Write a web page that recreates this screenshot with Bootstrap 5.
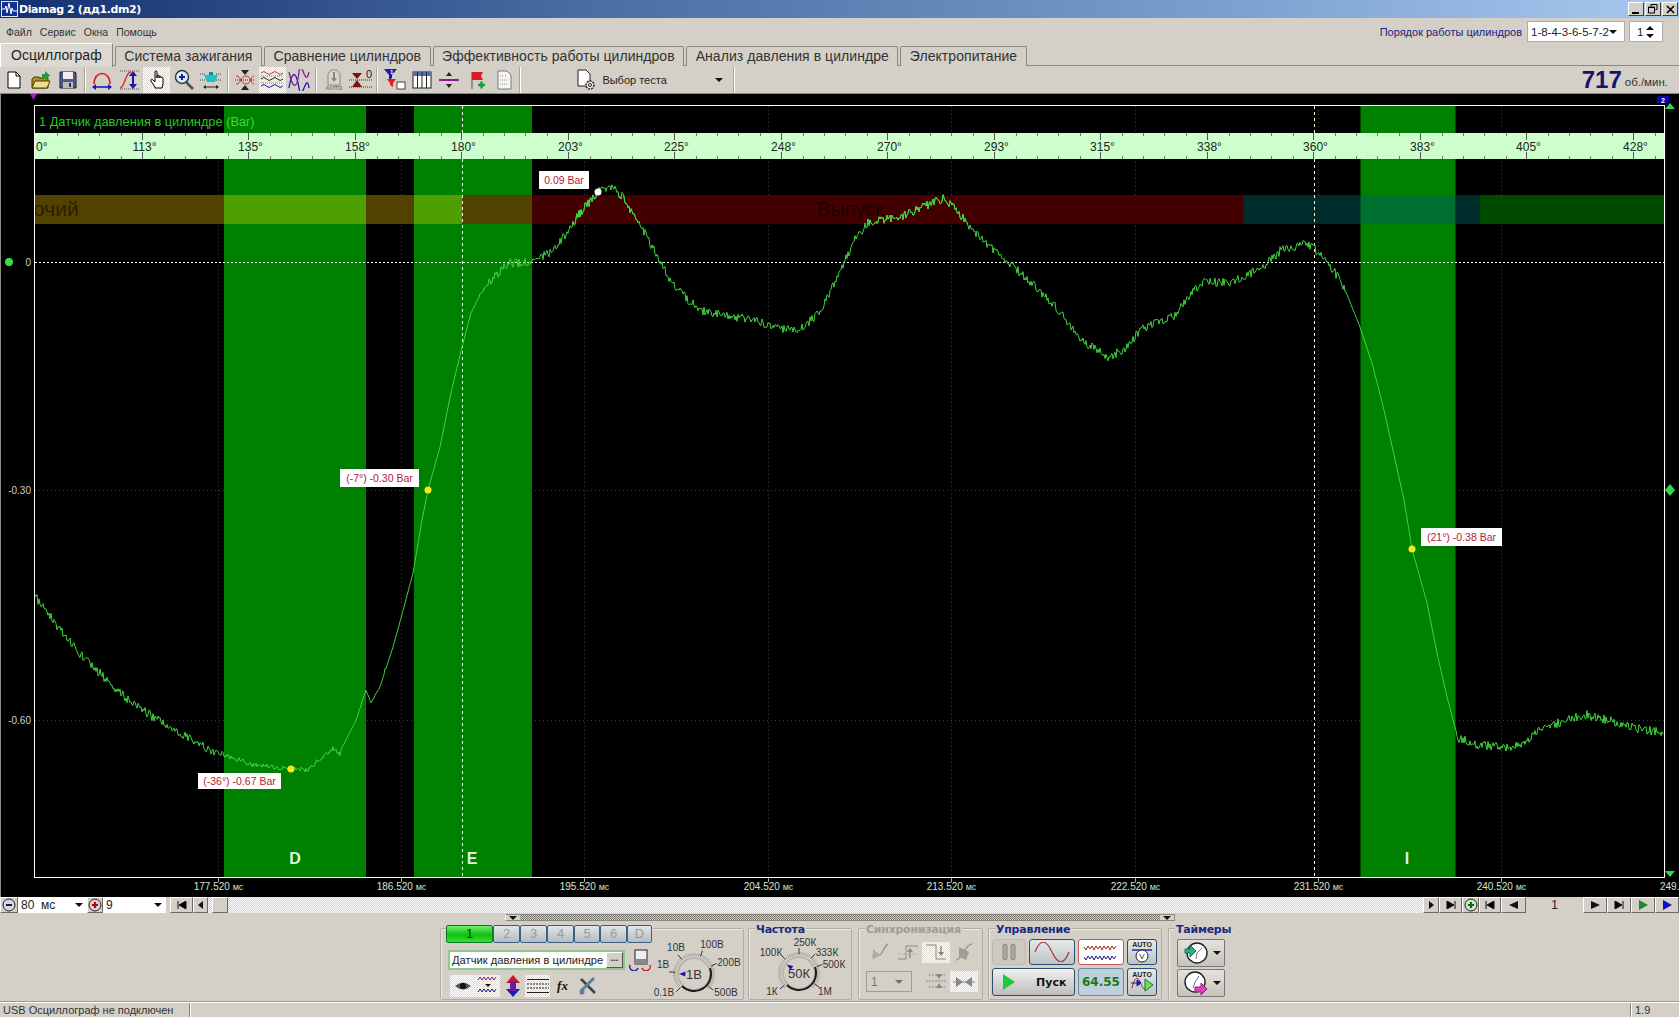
<!DOCTYPE html>
<html lang="ru">
<head>
  <meta charset="UTF-8">
  <title>Diamag 2 (дд1.dm2)</title>
  <meta name="viewport" content="width=device-width, initial-scale=1">
  <link href="https://cdn.jsdelivr.net/npm/bootstrap@5.3.3/dist/css/bootstrap.min.css" rel="stylesheet">
  <style>
    html, body { height: 100%; }
    body { background: #d4d0c8; color: #222; font: 11px "Liberation Sans", Arial, sans-serif; overflow: hidden; }
    svg { display: block; flex: none; }
    .app-shell { width: 1679px; height: 1017px; }

    .title-bar { height: 18px; background: linear-gradient(90deg, #12306f 0, #4a6da3 35%, #7094c4 65%, #a6caf0 100%); color: #fff; font: bold 11px "DejaVu Sans", sans-serif; letter-spacing: -.4px; }
    .win-btn { width: 16px; height: 14px; margin-right: 1px; background: #d4d0c8; border: 1px solid; border-color: #fff #404040 #404040 #fff; }
    .menu-row { height: 27px; padding-left: 6px; color: #333; font-size: 10.5px; gap: 8px; }
    .order-label { color: #1b1b80; font-size: 11px; margin-right: 5px; }
    .fake-combo { background: #fff; height: 21px; border: 1px solid #b0aca4; color: #222; font-size: 11.5px; padding-left: 3px; white-space: nowrap; }
    .down-tri { width: 0; height: 0; border-left: 4px solid transparent; border-right: 4px solid transparent; border-top: 4px solid #111; flex: none; }
    .up-tri { width: 0; height: 0; border-left: 4px solid transparent; border-right: 4px solid transparent; border-bottom: 4px solid #111; }

    .sheet-tabs { height: 21px; border-bottom: 1px solid #8a877f; padding-left: 0; flex-wrap: nowrap; gap: 2px; }
    .sheet-tabs .nav-link { height: 20px; margin: 1px 0 0; padding: 0 8.5px; border: 1px solid #8a877f; border-bottom: 0; border-radius: 2px 2px 0 0; background: #d4d0c8; color: #333; font-size: 14px; line-height: 18px; letter-spacing: .05px; white-space: nowrap; }
    .sheet-tabs .nav-link.active { height: 24px; margin: -2px 0 -1px; padding: 0 10px; background: #dcd9d2; color: #222; border-color: #fff #8a877f #d4d0c8 #fff; line-height: 22px; }

    .tool-row { height: 28px; border-bottom: 1px solid #8a877f; }
    .tool-btn { width: 27.2px; height: 26px; }
    .tool-on { background: repeating-conic-gradient(#fff 0 25%, #dedbd5 0 50%) 0 0 / 2px 2px; }
    .tool-sep { width: 7px; height: 26px; position: relative; }
    .tool-sep::after { content: ""; display: block; width: 1px; height: 26px; margin-left: 2px; background: #a8a59d; box-shadow: 1px 0 #fff; }
    .test-pick { width: 207px; height: 26px; padding-left: 52px; font-size: 11px; color: #222; }
    .rpm-num { color: #14146e; font: bold 24px/26px "Liberation Sans", sans-serif; }
    .rpm-unit { color: #333; font-size: 11.5px; margin: 5px 11px 0 3px; }

    .plot-area { height: 803px; background: #000; }

    .scroll-row { height: 16px; }
    .dither { background: repeating-conic-gradient(#fff 0 25%, #d4d0c8 0 50%) 0 0 / 2px 2px; }
    .raised { background: #d4d0c8; border: 1px solid; border-color: #fff #6a6a6a #6a6a6a #fff; height: 16px; }
    .white-combo { background: #fff; height: 16px; font-size: 12px; padding-left: 3px; color: #222; }

    .ctrl-panel { height: 89px; padding-left: 440px; border-bottom: 1px solid #9a9790; }
    .split-bar { width: 670px; height: 7px; margin: 1px 0 7px 65px; border: 1px solid #8a877f; border-left-color: #fff; background: repeating-conic-gradient(#77746d 0 25%, #d4d0c8 0 50%) 0 0 / 2px 2px; }
    .split-tip { width: 14px; background: #d4d0c8; }
    .ctl-group { height: 72px; border: 1px solid #b0ada5; box-shadow: inset 1px 1px #ece9e3; border-radius: 2px; }
    .ctl-title { width: fit-content; margin: -5px 0 0 6px; padding: 0 1px; background: #d4d0c8; color: #1a2a80; font: bold 11px/12px "DejaVu Sans", sans-serif; letter-spacing: -.25px; }
    .ctl-title.off { color: #a09d96; }

    .btn.chan-btn { height: 18px; padding: 0; border: 1px solid #3b5f86; border-radius: 2px; background: linear-gradient(#e2e5e8, #b6bdc2); color: #9a9a9a; font-size: 13px; line-height: 16px; }
    .btn.chan-btn.on { background: linear-gradient(#6af06a, #10c010 55%, #34e034); border-color: #0a7a2a; color: #0a3a0a; }
    .sensor-box { width: 177px; height: 20px; margin-left: 7px; background: #fff; border: 2px solid #8fc98f; font-size: 11.2px; color: #222; padding-left: 2px; white-space: nowrap; }
    .dots-btn { width: 17px; height: 16px; margin-left: auto; background: #d4d0c8; border: 1px solid; border-color: #fff #555 #555 #fff; font: bold 9px/10px "Liberation Sans", sans-serif; text-align: center; flex: none; }
    .mini-icon { width: 25px; height: 22px; }

    .sync-grid { display: grid; grid-template-columns: repeat(4, 28px); row-gap: 8px; margin: 6px 0 0 7px; }
    .sync-cell { height: 21px; }
    .sync-combo { grid-column: span 2; width: 46px; height: 21px; border: 1px solid #a09d96; color: #777; font-size: 12px; padding-left: 4px; }

    .run-grid { display: grid; grid-template-columns: 34px 46px 46px 30px; grid-template-rows: 26px 28px; gap: 3px; margin: 3px 0 0 3px; }
    .btn.run-btn { padding: 0; border: 1px solid #2c4c6c; border-radius: 3px; background: linear-gradient(#e6e9ea, #bcc4c7); font-size: 12px; display: flex; align-items: center; justify-content: center; }
    .btn.run-btn.flat { border-color: #bdbab3; background: #ccc9c2; }
    .btn.run-btn.alert-line { border-color: #c05a5a; background: #fff; }
    .btn.run-btn.start-btn { grid-column: span 2; background: linear-gradient(#f0f0f0, #bdbdbd); color: #111; font: bold 11px "DejaVu Sans", sans-serif; gap: 20px; justify-content: flex-start; padding-left: 9px; }
    .btn.run-btn.freq-val { background: #bfd0dc; border-color: #6a8aaa; color: #1a7a1a; font: bold 12px "DejaVu Sans", sans-serif; }
    .btn.timer-btn { width: 48px; height: 28px; margin: 0 0 2px 8px; padding: 0 5px; border: 1px solid #777; border-radius: 2px; background: linear-gradient(#e4e2dd, #c6c3bb); display: flex; align-items: center; gap: 4px; }

    .status-row { height: 15px; font-size: 11px; color: #333; line-height: 15px; border-top: 1px solid #fff; }
    .status-cell { border-right: 1px solid #8a877f; box-shadow: 1px 0 #fff; padding-left: 3px; }
  </style>
</head>
<body>
<div class="app-shell d-flex flex-column">

  <div class="title-bar d-flex align-items-center">
    <svg width="17" height="16" viewBox="0 0 17 16" style="margin:0 1px"><rect x=".5" y=".5" width="16" height="15" fill="#12309a" stroke="#dfe6f5"/><path d="M1 8h3l1-3 1 7 2-10 2 11 1-6 1 3h4" fill="none" stroke="#fff"/></svg>
    <span>Diamag 2 (дд1.dm2)</span>
    <div class="ms-auto d-flex">
      <div class="win-btn d-flex align-items-end justify-content-center"><svg width="8" height="4"><rect y="1" width="7" height="2" fill="#000"/></svg></div>
      <div class="win-btn d-flex align-items-center justify-content-center"><svg width="10" height="10"><path d="M3 2V.5h6v5H7.5M.5 3h6v6h-6zM.5 3.500h6" fill="none" stroke="#000"/></svg></div>
      <div class="win-btn d-flex align-items-center justify-content-center"><svg width="9" height="9"><path d="M1 1l7 7M8 1l-7 7" stroke="#000" stroke-width="1.6"/></svg></div>
    </div>
  </div>

  <div class="menu-row d-flex align-items-center">
    <span>Файл</span><span>Сервис</span><span>Окна</span><span>Помощь</span>
    <div class="ms-auto d-flex align-items-center">
      <span class="order-label">Порядок работы цилиндров</span>
      <div class="fake-combo d-flex align-items-center" style="width:98px"><span>1-8-4-3-6-5-7-2</span><i class="down-tri ms-auto me-2"></i></div>
      <div class="fake-combo d-flex align-items-center ms-1" style="width:34px;margin-right:16px"><span class="ms-1">1</span><span class="ms-auto me-2 d-flex flex-column gap-1"><i class="up-tri"></i><i class="down-tri"></i></span></div>
    </div>
  </div>

  <ul class="nav nav-tabs sheet-tabs">
    <li class="nav-item"><a class="nav-link active" href="#">Осциллограф</a></li>
    <li class="nav-item"><a class="nav-link" href="#">Система зажигания</a></li>
    <li class="nav-item"><a class="nav-link" href="#">Сравнение цилиндров</a></li>
    <li class="nav-item"><a class="nav-link" href="#">Эффективность работы цилиндров</a></li>
    <li class="nav-item"><a class="nav-link" href="#">Анализ давления в цилиндре</a></li>
    <li class="nav-item"><a class="nav-link" href="#">Электропитание</a></li>
  </ul>

  <div class="tool-row d-flex align-items-center">
    <div class="tool-btn d-flex align-items-center justify-content-center"><svg width="22" height="22"><path d="M5 3h8l4 4v12H5z" fill="#fff" stroke="#000"/><path d="M13 3v4h4" fill="none" stroke="#000"/></svg></div>
    <div class="tool-btn d-flex align-items-center justify-content-center"><svg width="22" height="22"><path d="M2 10l2-2h5v1h9v10H2z" fill="#a8902a" stroke="#4a3c00"/><path d="M2 19l3-7h15l-3 7z" fill="#efe08e" stroke="#4a3c00"/><path d="M12 9V5h3V2l5 4.500-5 4.500V8h-1v2z" fill="#1c9a3c"/></svg></div>
    <div class="tool-btn d-flex align-items-center justify-content-center"><svg width="22" height="22"><path d="M3 3h15l1 1v15H3z" fill="#54548c" stroke="#222"/><rect x="6" y="3" width="10" height="7" fill="#eee"/><rect x="6" y="13" width="10" height="6" fill="#bbb"/><rect x="12" y="14" width="2" height="4" fill="#333"/></svg></div>
    <div class="tool-sep"></div>
    <div class="tool-btn d-flex align-items-center justify-content-center"><svg width="22" height="22"><path d="M3 15C3 1 19 1 19 15" fill="none" stroke="#d82020" stroke-width="1.6"/><path d="M2 18h18" stroke="#1a1ab0" stroke-width="1.6"/><path d="M1 18l4-3v6zM21 18l-4-3v6z" fill="#1a1ab0"/></svg></div>
    <div class="tool-btn d-flex align-items-center justify-content-center"><svg width="22" height="22"><path d="M2 19C7 19 7 3 13 3" fill="none" stroke="#d83020" stroke-width="1.4"/><path d="M2 2h19M2 20h19" stroke="#555" stroke-dasharray="1 1"/><path d="M15 5v12" stroke="#1a1ab0" stroke-width="2"/><path d="M15 2l-4 5h8zM15 20l-4-5h8z" fill="#1a1ab0"/></svg></div>
    <div class="tool-btn tool-on d-flex align-items-center justify-content-center"><svg width="22" height="22"><path d="M9 18l-4-6c-1-2 1-2 2-1l2 2V3c0-1.500 2-1.500 2 0v6-2c0-1.300 2-1.300 2 0v2-1c0-1.300 2-1.300 2 0v1c0-1 2-1 2 .5V15l-1 4H9z" fill="#fff" stroke="#000"/></svg></div>
    <div class="tool-btn d-flex align-items-center justify-content-center"><svg width="22" height="22"><path d="M13 13l7 7" stroke="#554" stroke-width="2.6"/><circle cx="9" cy="8" r="6.500" fill="#dcecff" stroke="#333" stroke-width="1.400"/><path d="M6 8h6M9 5v6" stroke="#1a1ab0" stroke-width="2"/></svg></div>
    <div class="tool-btn d-flex align-items-center justify-content-center"><svg width="24" height="22"><path d="M5 6h14l-3 7h-8z" fill="#19c5c5"/><path d="M1 5h6M17 5h6M1 11h6M17 11h6" stroke="#444" stroke-dasharray="1 1"/><path d="M6 18h12" stroke="#222"/><path d="M4 18l3-2v4zM20 18l-3-2v4z" fill="#222"/><path d="M10 3h4v3h-4z" fill="#0d8f8f"/></svg></div>
    <div class="tool-sep"></div>
    <div class="tool-btn d-flex align-items-center justify-content-center"><svg width="22" height="22"><path d="M2 7c5 0 5 8 10 8s5-8 8-8M2 15c5 0 5-8 10-8s5 8 8 8" fill="none" stroke="#c83030"/><path d="M11 6l-4-5h8zM11 16l-4 5h8z" fill="#222"/><path d="M1 11h20" stroke="#333" stroke-dasharray="1 1"/></svg></div>
    <div class="tool-btn tool-on d-flex align-items-center justify-content-center"><svg width="24" height="24"><path d="M1 5q3-3 5.500 0t5.500 0 5.500 0 5.500 0" fill="none" stroke="#c83030"/><path d="M1 11q3-3 5.500 0t5.500 0 5.500 0 5.500 0" fill="none" stroke="#222"/><path d="M1 18q3-3 5.500 0t5.500 0 5.500 0 5.500 0" fill="none" stroke="#1a1ab0"/><path d="M1 8h22M1 15h22" stroke="#777" stroke-dasharray="1 1"/></svg></div>
    <div class="tool-btn d-flex align-items-center justify-content-center"><svg width="22" height="22"><path d="M1 19C4 1 8 1 11 19S18 1 21 19" fill="none" stroke="#1a1ab0" stroke-width="1.300"/><path d="M1 3c4 18 8 18 10 0s6 18 10 0" fill="none" stroke="#8a1a8a" stroke-width="1.300"/></svg></div>
    <div class="tool-sep"></div>
    <div class="tool-btn d-flex align-items-center justify-content-center"><svg width="24" height="24"><path d="M9 2h6l3 4v11H6V6z" fill="#d8d5ce" stroke="#8a877f"/><path d="M12 4v8" stroke="#8a877f" stroke-width="2"/><path d="M12 14l-3-4h6z" fill="#8a877f"/><text x="12" y="22" font-size="6" font-weight="700" text-anchor="middle" fill="#77746d">AUTO</text></svg></div>
    <div class="tool-btn d-flex align-items-center justify-content-center"><svg width="24" height="22"><path d="M8 10l-5-6h10zM8 11l-5 7h10z" fill="#7a1010"/><path d="M0 11h24M0 18h24" stroke="#333" stroke-dasharray="1 1"/><text x="17" y="9" font-size="11" fill="#222">0</text></svg></div>
    <div class="tool-sep"></div>
    <div class="tool-btn d-flex align-items-center justify-content-center"><svg width="24" height="24"><path d="M1 1h13l-5 6v3l-3 2V7z" fill="#1a1ab0"/><path d="M4 11h9l-3 4v4l-3-2v-2z" fill="#d82020"/><rect x="14" y="14" width="8" height="7" fill="#fff" stroke="#444"/><text x="7" y="6" font-size="6" fill="#fff" font-weight="700">1</text></svg></div>
    <div class="tool-btn d-flex align-items-center justify-content-center"><svg width="22" height="22"><rect x="2" y="3" width="18" height="16" fill="#fff" stroke="#222"/><rect x="2" y="3" width="18" height="4" fill="#5a6fae"/><path d="M6.500 3v16M11 3v16M15.500 3v16" stroke="#222"/></svg></div>
    <div class="tool-btn d-flex align-items-center justify-content-center"><svg width="22" height="22"><path d="M1 11h20" stroke="#8a1a9a" stroke-width="2"/><path d="M11 3l-3 4h6zM11 19l-3-4h6z" fill="#222"/></svg></div>
    <div class="tool-btn d-flex align-items-center justify-content-center"><svg width="22" height="22"><path d="M6 20V3" stroke="#555"/><path d="M6 3h11l-2 4 2 4H6z" fill="#d81a2a"/><path d="M12 16h7M15.500 12.500v7" stroke="#1a9a3a" stroke-width="2.400"/></svg></div>
    <div class="tool-btn d-flex align-items-center justify-content-center"><svg width="22" height="22"><path d="M5 2h9l4 4v14H5z" fill="#f6f6f0" stroke="#777"/><path d="M7 7h3M7 11h7M7 15h7M12 7h2" stroke="#888" stroke-dasharray="1 1"/></svg></div>
    <div class="tool-sep"></div>
    <div class="test-pick d-flex align-items-center">
      <svg width="22" height="22" class="me-1"><path d="M2 1h8l4 4v12H2z" fill="#fff" stroke="#222"/><circle cx="14" cy="16" r="4" fill="#eee" stroke="#222" stroke-width="1.500" stroke-dasharray="2 1"/><circle cx="14" cy="16" r="1.500" fill="#fff" stroke="#222"/></svg>
      <span>Выбор теста</span><i class="down-tri ms-auto me-2"></i>
    </div>
    <div class="tool-sep"></div>
    <div class="ms-auto d-flex align-items-center"><span class="rpm-num">717</span><span class="rpm-unit">об./мин.</span></div>
  </div>

  <div class="plot-area">
    <svg id="plot" width="1679" height="803" viewBox="0 94 1679 803" font-family="Liberation Sans, Arial, sans-serif">
      <defs><clipPath id="phase-clip"><rect x="34" y="195" width="1631" height="29"/></clipPath></defs>
      <g id="grid-lines"></g>
      <g fill="#008000">
        <rect x="224" y="105" width="142" height="772"/>
        <rect x="414" y="105" width="118" height="772"/>
        <rect x="1360.500" y="105" width="95" height="772"/>
      </g>
      <g>
        <rect x="34" y="195" width="190" height="29" fill="#524200"/>
        <rect x="224" y="195" width="142" height="29" fill="#4ea000"/>
        <rect x="366" y="195" width="48" height="29" fill="#524200"/>
        <rect x="414" y="195" width="48" height="29" fill="#4ea000"/>
        <rect x="462" y="195" width="70" height="29" fill="#524200"/>
        <rect x="532" y="195" width="711" height="29" fill="#420000"/>
        <rect x="1243" y="195" width="117.500" height="29" fill="#002c2c"/>
        <rect x="1360.500" y="195" width="95" height="29" fill="#007030"/>
        <rect x="1455.500" y="195" width="24.500" height="29" fill="#002c2c"/>
        <rect x="1480" y="195" width="185" height="29" fill="#004a00"/>
        <text x="33" y="216" font-size="21" fill="#2a2000">очий</text>
        <text x="817" y="216" font-size="20" fill="#1e0000">Выпуск</text>
      </g>
      <text x="39" y="126" font-size="12.800" fill="#22cc22">1 Датчик давления в цилиндре <tspan fill="#3bd83b">(Bar)</tspan></text>
      <rect x="35" y="133" width="1630" height="26" fill="#ccffcc"/>
      <g id="ruler"></g>
      <path d="M35 262.500H1664" stroke="#fff" stroke-dasharray="2 2"/>
      <path d="M462.500 106V133M462.500 159V877" stroke="#f4f4f4" stroke-dasharray="3 3"/>
      <path d="M1314.500 106V133M1314.500 159V877" stroke="#f4f4d0" stroke-dasharray="3 3"/>
      <path id="trace" fill="none" stroke="#3fd43f"/>
      <use href="#trace" clip-path="url(#phase-clip)" style="stroke:#9aa83a"/>
      <path d="M34.500 105V877.500M34 105.500H1665M34 877.500H1665M1664.500 105V877" stroke="#fff" fill="none"/>
      <path d="M1665.500 105V877" stroke="#0000c0"/>
      <path d="M.5 94V897" stroke="#8a8a8a"/>

      <circle cx="9" cy="262" r="4" fill="#2fe04f"/>
      <g font-size="10" fill="#d0d0d0" text-anchor="end">
        <text x="31" y="266">0</text><text x="31" y="494">-0.30</text><text x="31" y="724">-0.60</text>
      </g>
      <path d="M30 94h7l-3.500 6z" fill="#a018c8"/>
      <rect x="1657" y="96" width="12" height="7" fill="#0808b0"/>
      <text x="1663" y="102.500" font-size="7" font-weight="700" fill="#fff" text-anchor="middle">2</text>
      <path d="M1670 103l5 6h-10z" fill="#2fd84f"/>
      <path d="M1670 484l5 6-5 6-5-6z" fill="#2fd84f"/>
      <path d="M1665 871h10l-5 6z" fill="#2fd84f"/>

      <g id="time-labels" font-size="10" fill="#d4e4d4" text-anchor="middle"></g>

      <g font-size="16" font-weight="700" fill="#dff5df" text-anchor="middle">
        <text x="295" y="864">D</text><text x="472" y="864">E</text><text x="1407" y="864">I</text>
      </g>

      <g font-size="10.500" fill="#b8163a" text-anchor="middle">
        <rect x="539" y="171" width="50" height="18" fill="#fff"/><text x="564" y="184">0.09 Bar</text>
        <rect x="340" y="469" width="79" height="18" fill="#fff"/><text x="379.500" y="482">(-7°) -0.30 Bar</text>
        <rect x="198" y="773" width="83" height="16" fill="#fff"/><text x="239.500" y="785">(-36°) -0.67 Bar</text>
        <rect x="1421" y="528" width="81" height="18" fill="#fff"/><text x="1461.500" y="541">(21°) -0.38 Bar</text>
      </g>
      <circle cx="598" cy="192" r="3.500" fill="#fff"/>
      <circle cx="428" cy="490" r="3.500" fill="#f4e81a"/>
      <circle cx="291" cy="769" r="3.500" fill="#f4e81a"/>
      <circle cx="1412" cy="549" r="3.500" fill="#f4e81a"/>
    </svg>
  </div>

  <div class="scroll-row d-flex">
    <div class="raised d-flex align-items-center justify-content-center" style="width:18px"><svg width="14" height="14"><circle cx="7" cy="7" r="6" fill="#cfd6e6" stroke="#222"/><path d="M4 7h6" stroke="#222" stroke-width="2"/></svg></div>
    <div class="white-combo d-flex align-items-center" style="width:69px"><span>80&nbsp; мс</span><i class="down-tri ms-auto me-1"></i></div>
    <div class="raised d-flex align-items-center justify-content-center" style="width:16px"><svg width="14" height="14"><circle cx="7" cy="7" r="6" fill="#e6c6c6" stroke="#222"/><path d="M4 7h6M7 4v6" stroke="#a01010" stroke-width="2"/></svg></div>
    <div class="white-combo d-flex align-items-center" style="width:63px"><span>9</span><i class="down-tri ms-auto me-1"></i></div>
    <div class="raised d-flex align-items-center justify-content-center ms-1" style="width:23px"><svg width="10" height="8"><path d="M1 0v8M9 0v8L2 4z" stroke="#111"/></svg></div>
    <div class="raised d-flex align-items-center justify-content-center" style="width:15px"><svg width="5" height="8"><path d="M5 0v8L0 4z" fill="#111"/></svg></div>
    <div class="dither flex-grow-1 d-flex">
      <div class="raised ms-1" style="width:16px"></div>
    </div>
    <div class="raised d-flex align-items-center justify-content-center" style="width:16px"><svg width="5" height="8"><path d="M0 0v8l5-4z" fill="#111"/></svg></div>
    <div class="raised d-flex align-items-center justify-content-center" style="width:23px"><svg width="10" height="8"><path d="M9 0v8M1 0v8l7-4z" stroke="#111"/></svg></div>
    <div class="raised d-flex align-items-center justify-content-center" style="width:17px"><svg width="14" height="14"><circle cx="7" cy="7" r="6" fill="#c6e6c6" stroke="#222"/><path d="M4 7h6M7 4v6" stroke="#0a6a0a" stroke-width="2"/></svg></div>
    <div class="raised d-flex align-items-center justify-content-center" style="width:22px"><svg width="10" height="8"><path d="M1 0v8M9 0v8L2 4z" stroke="#111"/></svg></div>
    <div class="raised d-flex align-items-center justify-content-center" style="width:25px"><svg width="9" height="8"><path d="M9 0v8L0 4z" fill="#111"/></svg></div>
    <div class="d-flex align-items-center justify-content-center" style="width:57px;font-size:12px">1</div>
    <div class="raised d-flex align-items-center justify-content-center" style="width:24px"><svg width="9" height="8"><path d="M0 0v8l9-4z" fill="#111"/></svg></div>
    <div class="raised d-flex align-items-center justify-content-center" style="width:24px"><svg width="10" height="8"><path d="M9 0v8M1 0v8l7-4z" stroke="#111"/></svg></div>
    <div class="raised d-flex align-items-center justify-content-center" style="width:24px"><svg width="9" height="10"><path d="M0 0v10l9-5z" fill="#1c8a2c"/></svg></div>
    <div class="raised d-flex align-items-center justify-content-center" style="width:24px"><svg width="9" height="10"><path d="M0 0v10l9-5z" fill="#1010c8"/></svg></div>
  </div>

  <div class="ctrl-panel">
    <div class="split-bar d-flex justify-content-between">
      <div class="split-tip d-flex align-items-center justify-content-center"><i class="down-tri"></i></div>
      <div class="split-tip d-flex align-items-center justify-content-center"><i class="down-tri"></i></div>
    </div>
    <div class="d-flex">

      <div class="ctl-group d-flex" style="width:304px">
        <div style="width:213px">
          <div class="d-flex" style="margin:-4px 0 0 5px">
            <button class="btn chan-btn on" style="width:47px">1</button>
            <button class="btn chan-btn" style="width:27px">2</button>
            <button class="btn chan-btn" style="width:27px">3</button>
            <button class="btn chan-btn" style="width:27px">4</button>
            <button class="btn chan-btn" style="width:26px">5</button>
            <button class="btn chan-btn" style="width:27px">6</button>
            <button class="btn chan-btn" style="width:25px">D</button>
          </div>
          <div class="d-flex align-items-center" style="margin-top:6px">
            <div class="sensor-box d-flex align-items-center"><span>Датчик давления в цилиндре</span><span class="dots-btn">...</span></div>
            <svg class="ms-1" width="22" height="22"><rect x="6" y="1" width="12" height="14" fill="#eee" stroke="#222"/><rect x="6" y="10" width="12" height="5" fill="#888"/><path d="M1 16a4 4 0 0 0 8 3" fill="none" stroke="#1a1ab0" stroke-width="1.400"/><path d="M21 16a4 4 0 0 1-8 3" fill="none" stroke="#c82020" stroke-width="1.400"/></svg>
          </div>
          <div class="d-flex align-items-center" style="margin:4px 0 0 9px">
            <div class="mini-icon tool-on d-flex align-items-center justify-content-center"><svg width="20" height="14"><path d="M2 7q8-7 16 0-8 7-16 0z" fill="#555"/><circle cx="10" cy="7" r="3" fill="#111"/></svg></div>
            <div class="mini-icon tool-on d-flex align-items-center justify-content-center"><svg width="22" height="20"><path d="M1 4l2-3 2 3 2-3 2 3 2-3 2 3 2-3 2 3 2-3" fill="none" stroke="#8a1a8a"/><path d="M1 16l2-3 2 3 2-3 2 3 2-3 2 3 2-3 2 3 2-3" fill="none" stroke="#1a1ab0"/><path d="M8 8h6l-3 3z" fill="#111"/></svg></div>
            <div class="mini-icon d-flex align-items-center justify-content-center"><svg width="18" height="22"><path d="M9 0l7 8H2z" fill="#c81a2a"/><path d="M9 22l7-8H2z" fill="#1a1ab8"/><rect x="6" y="6" width="6" height="10" fill="#6a1a9a"/></svg></div>
            <div class="mini-icon tool-on d-flex align-items-center justify-content-center"><svg width="22" height="18"><path d="M0 2.500h22M0 15.500h22" stroke="#222"/><path d="M0 7h22M0 11h22" stroke="#222" stroke-dasharray="2 1"/></svg></div>
            <div class="mini-icon d-flex align-items-center justify-content-center" style="font:italic bold 13px 'Liberation Serif',serif;color:#111">fx</div>
            <div class="mini-icon d-flex align-items-center justify-content-center"><svg width="20" height="20"><path d="M3 3l14 14" stroke="#444" stroke-width="2.500"/><path d="M16 2L3 15" stroke="#5a7fa8" stroke-width="3"/><circle cx="4" cy="16" r="2.500" fill="#5a7fa8"/></svg></div>
          </div>
        </div>
        <svg id="volt-knob" width="89" height="70" viewBox="655 929 89 70" font-size="10" fill="#333"></svg>
      </div>

      <div class="ctl-group ms-1" style="width:104px">
        <div class="ctl-title">Частота</div>
        <svg id="freq-knob" width="102" height="62" viewBox="749 937 102 62" font-size="10" fill="#333"></svg>
      </div>

      <div class="ctl-group" style="width:125px;margin-left:6px">
        <div class="ctl-title off">Синхронизация</div>
        <div class="sync-grid">
          <div class="sync-cell d-flex justify-content-center"><svg width="20" height="20"><path d="M2 14l8-1c3-2 4-9 8-11" fill="none" stroke="#9a978f" stroke-width="1.400"/><path d="M3 7l7 6-7 5z" fill="#b0ada5"/></svg></div>
          <div class="sync-cell d-flex justify-content-center"><svg width="22" height="20"><path d="M1 17h8V4h12" fill="none" stroke="#8a877f"/><path d="M13 16V8" stroke="#8a877f" stroke-width="1.400"/><path d="M13 6l-3 4h6z" fill="#8a877f"/><path d="M1 12h20" stroke="#aaa" stroke-dasharray="1 1"/></svg></div>
          <div class="sync-cell tool-on d-flex justify-content-center"><svg width="22" height="20"><path d="M1 3h10v14h10" fill="none" stroke="#8a877f"/><path d="M16 4v8" stroke="#8a877f" stroke-width="1.400"/><path d="M16 14l-3-4h6z" fill="#8a877f"/></svg></div>
          <div class="sync-cell d-flex justify-content-center"><svg width="22" height="20"><path d="M3 18C9 18 12 2 19 2" fill="none" stroke="#9a978f" stroke-width="1.400"/><path d="M6 5l10 5-3 8-7-3z" fill="#a09d96"/></svg></div>
          <div class="sync-combo d-flex align-items-center"><span>1</span><i class="down-tri ms-auto me-2 opacity-50"></i></div>
          <div class="sync-cell d-flex justify-content-center"><svg width="22" height="20"><path d="M1 10h20M4 4h16M4 16h16" stroke="#8a877f" stroke-dasharray="2 1"/><path d="M14 8l-3-5h6zM14 12l-3 5h6z" fill="#8a877f"/></svg></div>
          <div class="sync-cell tool-on d-flex justify-content-center align-items-center"><svg width="22" height="12"><path d="M0 6h22" stroke="#8a877f"/><path d="M10 6L3 1v10zM12 6l7-5v10z" fill="#8a877f"/></svg></div>
        </div>
      </div>

      <div class="ctl-group" style="width:174px;margin-left:5px">
        <div class="ctl-title">Управление</div>
        <div class="run-grid">
          <button class="btn run-btn flat"><svg width="14" height="20"><rect x="1" y="2" width="4" height="16" rx="2" fill="#aaa7a0" stroke="#8a877f"/><rect x="9" y="2" width="4" height="16" rx="2" fill="#aaa7a0" stroke="#8a877f"/></svg></button>
          <button class="btn run-btn"><svg width="36" height="20"><path d="M1 10C6-3 12-3 18 10s12 13 17 0" fill="none" stroke="#b03030" stroke-width="1.200"/></svg></button>
          <button class="btn run-btn alert-line"><svg width="36" height="20"><path d="M1 5l2 3 2-4 2 3 2-3 2 4 2-4 2 3 2-3 2 4 2-4 2 3 2-3 2 4 2-4 2 3 2-3" fill="none" stroke="#a02020"/><path d="M1 15l2 3 2-4 2 3 2-3 2 4 2-4 2 3 2-3 2 4 2-4 2 3 2-3 2 4 2-4 2 3 2-3" fill="none" stroke="#1a1a80"/></svg></button>
          <button class="btn run-btn"><svg width="24" height="24"><text x="12" y="7" font-size="7" font-weight="700" text-anchor="middle" fill="#222">AUTO</text><path d="M2 10h20" stroke="#1a1ab0" stroke-width="1.400"/><circle cx="12" cy="16" r="6" fill="#fff" stroke="#222"/><text x="12" y="19" font-size="8" text-anchor="middle" fill="#222">V</text></svg></button>
          <button class="btn run-btn start-btn"><svg width="14" height="18"><path d="M1 1v16l12-8z" fill="#22c83a"/></svg><span>Пуск</span></button>
          <button class="btn run-btn freq-val">64.55</button>
          <button class="btn run-btn"><svg width="24" height="24"><text x="12" y="7" font-size="7" font-weight="700" text-anchor="middle" fill="#222">AUTO</text><path d="M2 18c3-12 6-12 9-4s6 6 8 0" fill="none" stroke="#a02020"/><path d="M1 13h6M7 10l4 3-4 3z" fill="#1a1ab0" stroke="#1a1ab0"/><path d="M15 9l8 6-8 6z" fill="#6ae05a" stroke="#1a7a1a"/></svg></button>
        </div>
      </div>

      <div class="ctl-group" style="width:66px;margin-left:6px;border-right:0;border-bottom:0">
        <div class="ctl-title">Таймеры</div>
        <button class="btn timer-btn" style="margin-top:3px"><svg width="26" height="24"><circle cx="14" cy="12" r="10" fill="#fff" stroke="#222" stroke-width="1.400"/><path d="M14 12l5-5M14 12l-1 6" stroke="#a06a6a"/><path d="M2 8h5V4l6 6-6 6v-4H2z" fill="#2ab08a" stroke="#1a6a5a"/></svg><i class="down-tri"></i></button>
        <button class="btn timer-btn"><svg width="26" height="24"><circle cx="12" cy="11" r="10" fill="#fff" stroke="#222" stroke-width="1.400"/><path d="M12 11l4-6M12 11l-2 6" stroke="#6a6aa0"/><path d="M12 16h6v-4l6 6-6 6v-3h-6z" fill="#e040c0" stroke="#8a1a7a"/></svg><i class="down-tri"></i></button>
      </div>
    </div>
  </div>

  <div class="status-row d-flex">
    <div class="status-cell" style="width:190px">USB Осциллограф не подключен</div>
    <div class="status-cell" style="width:1441px"></div>
    <div class="ps-1">1.9</div>
  </div>
</div>

<script src="https://cdn.jsdelivr.net/npm/bootstrap@5.3.3/dist/js/bootstrap.bundle.min.js"></script>
<script>
  const NS = 'http://www.w3.org/2000/svg';
  function put(parent, tag, attrs, text) {
    const el = document.createElementNS(NS, tag);
    for (const k in attrs) el.setAttribute(k, attrs[k]);
    if (text !== undefined) el.textContent = text;
    parent.appendChild(el);
    return el;
  }

  // dim grid, only seen outside the green bands
  const grid = document.getElementById('grid-lines');
  const timeLabels = document.getElementById('time-labels');
  const times = ['177.520', '186.520', '195.520', '204.520', '213.520', '222.520', '231.520', '240.520'];
  times.forEach((t, i) => {
    const x = Math.round(217.5 + 183.4 * i) + .5;
    put(grid, 'path', { d: `M${x} 106V877`, stroke: '#3a3a3a', 'stroke-dasharray': '1 3' });
    put(grid, 'path', { d: `M${x} 877V882`, stroke: '#aaa' });
    const label = put(timeLabels, 'text', { x: x, y: 890 }, t + ' ');
    put(label, 'tspan', { 'font-size': 9 }, 'мс');
  });
  put(timeLabels, 'text', { x: 1660, y: 890, 'text-anchor': 'start' }, '249.');
  [262, 490, 720].forEach(y => put(grid, 'path', { d: `M35 ${y + .5}H1664`, stroke: '#3a3a3a', 'stroke-dasharray': '1 3' }));

  // angle ruler
  const ruler = document.getElementById('ruler');
  const degrees = [0, 113, 135, 158, 180, 203, 225, 248, 270, 293, 315, 338, 360, 383, 405, 428];
  degrees.forEach((d, i) => {
    const x = Math.round(35 + 106.5 * i) + .5;
    if (i > 0) put(ruler, 'path', { d: `M${x} 133v7M${x} 152v7`, stroke: '#555' });
    put(ruler, 'text', { x: i ? x + 2 : 36, y: 151, 'font-size': 12, fill: '#222', 'text-anchor': i ? 'middle' : 'start' }, d + '°');
    for (let j = 1; j < 5; j++) {
      const mx = Math.round(x + 21.3 * j) + .5;
      if (mx < 1664) put(ruler, 'path', { d: `M${mx} 133v3M${mx} 156v3`, stroke: '#777' });
    }
  });

  // pressure trace: key points read off the screen, noise on top
  const pts = [[35,596],[58,627],[83,657],[112,685],[134,705],[170,727],[201,745],[223,755],[254,765],[291,769],[308,770],[333,748],[339,753],[355,723],[366,690],[371,703],[380,687],[393,647],[404,607],[413,573],[422,520],[428,490],[440,447],[451,393],[462,347],[471,313],[484,287],[496,275],[509,263],[531,262],[549,253],[567,233],[580,213],[598,192],[614,187],[625,200],[643,230],[661,263],[670,280],[688,300],[700,310],[738,317],[769,325],[797,332],[819,313],[831,290],[847,257],[856,237],[869,222],[906,215],[944,198],[959,213],[975,232],[1000,255],[1031,282],[1056,307],[1081,340],[1109,358],[1125,348],[1144,327],[1175,315],[1200,283],[1231,282],[1262,268],[1281,250],[1306,243],[1325,257],[1344,287],[1360,327],[1372,363],[1384,410],[1404,500],[1412,549],[1427,603],[1437,653],[1447,697],[1455,727],[1458,738],[1477,745],[1510,747],[1525,743],[1537,732],[1553,725],[1570,718],[1587,715],[1617,722],[1633,728],[1663,733]];
  let seed = 12345;
  function rnd() { seed = (seed * 1103515 + 12345) % 2147483648; return seed / 2147483648 - .5; }
  function noiseAt(x) {
    if (x > 385 && x < 480) return .5;
    if (x > 1345 && x < 1457) return .3;
    if (x > 340 && x < 385) return 1.5;
    if (x > 224 && x < 340) return 5;
    return 9;
  }
  let d = '', seg = 0;
  for (let x = 35; x <= 1663; x++) {
    while (pts[seg + 1][0] < x) seg++;
    const [x0, y0] = pts[seg], [x1, y1] = pts[seg + 1];
    const y = y0 + (y1 - y0) * (x - x0) / (x1 - x0) + rnd() * noiseAt(x);
    d += (d ? 'L' : 'M') + x + ' ' + y.toFixed(1);
  }
  document.getElementById('trace').setAttribute('d', d);

  // rotary switches
  function knob(id, cx, cy, centre, labels, pointerDeg) {
    const svg = document.getElementById(id);
    const at = (deg, r) => [cx + r * Math.sin(deg * Math.PI / 180), cy - r * Math.cos(deg * Math.PI / 180)];
    for (let deg = -135; deg <= 135; deg += 6) {
      const [a, b] = at(deg, 18), [e, f] = at(deg, 21);
      put(svg, 'path', { d: `M${a} ${b}L${e} ${f}`, stroke: '#a09d96' });
    }
    put(svg, 'circle', { cx, cy, r: 16, fill: '#d4d0c8', stroke: '#b8b5ae', 'stroke-width': 2 });
    put(svg, 'path', { d: `M${at(-135, 17).join(' ')}A17 17 0 0 0 ${at(70, 17).join(' ')}`, fill: 'none', stroke: '#1a1a1a', 'stroke-width': 2 });
    labels.forEach(l => {
      const [a, b] = at(l.deg, 19), [e, f] = at(l.deg, 25);
      put(svg, 'path', { d: `M${a} ${b}L${e} ${f}`, stroke: '#333' });
      put(svg, 'text', { x: l.x, y: l.y + 3.5, 'text-anchor': 'middle' }, l.t);
    });
    const [tx, ty] = at(pointerDeg, 15);
    const [bx, by] = at(pointerDeg - 16, 9), [ux, uy] = at(pointerDeg + 16, 9);
    put(svg, 'path', { d: `M${tx} ${ty}L${bx} ${by}L${ux} ${uy}z`, fill: '#1a1ab0' });
    put(svg, 'text', { x: cx, y: cy + 5, 'font-size': 13, 'text-anchor': 'middle' }, centre);
  }
  knob('volt-knob', 695, 974, '1В', [
    { t: '0.1В', deg: -135, x: 665, y: 992 }, { t: '1В', deg: -85, x: 664, y: 964 },
    { t: '10В', deg: -40, x: 677, y: 947 }, { t: '100В', deg: 20, x: 713, y: 944 },
    { t: '200В', deg: 65, x: 730, y: 962 }, { t: '500В', deg: 130, x: 727, y: 992 }
  ], -90);
  knob('freq-knob', 799, 974, '50К', [
    { t: '1К', deg: -130, x: 772, y: 992 }, { t: '100К', deg: -45, x: 771, y: 953 },
    { t: '250К', deg: 0, x: 805, y: 943 }, { t: '333К', deg: 40, x: 827, y: 953 },
    { t: '500К', deg: 70, x: 834, y: 965 }, { t: '1М', deg: 125, x: 825, y: 992 }
  ], -55);
</script>
</body>
</html>
